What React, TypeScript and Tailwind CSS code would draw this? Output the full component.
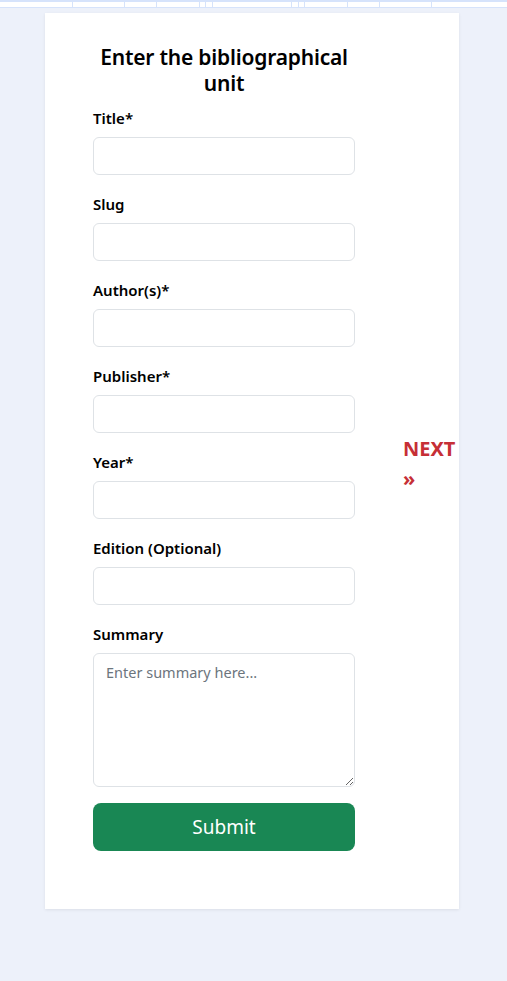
import React from "react";

const fields = [
  "Title*",
  "Slug",
  "Author(s)*",
  "Publisher*",
  "Year*",
  "Edition (Optional)",
];

const ticks = [72, 124, 156, 199, 205, 212, 291, 298, 304, 347, 379, 431];

export default function App() {
  return (
    <div
      className="min-h-[981px] bg-[#edf1fa] relative"
      style={{ fontFamily: '"Noto Sans", "Open Sans", sans-serif' }}
    >
      {/* top strip left over from the page above */}
      <div className="h-[8px] bg-white border-t-2 border-b border-[#d6e3fb] relative">
        {ticks.map((x) => (
          <div
            key={x}
            className="absolute top-0 bottom-0 w-px bg-[#d6e3fb]"
            style={{ left: x }}
          />
        ))}
      </div>

      <div className="pt-[5px] px-[45px] pr-[48px]">
        <div className="bg-white shadow-[0_1px_3px_rgba(0,0,0,0.08)] h-[896px] pl-[48px] flex items-center">
          {/* form column */}
          <div className="w-[262px] self-start pt-[31px]">
            <h2 className="text-[21px] leading-[26px] font-semibold text-center text-black mb-[11px] tracking-[-0.2px]">
              Enter the bibliographical
              <br />
              unit
            </h2>
            {fields.map((label) => (
              <div key={label} className="mb-[18px]">
                <label className="block text-[15px] font-semibold text-black leading-[22px] mb-[8px]">
                  {label}
                </label>
                <input
                  type="text"
                  className="block w-full h-[38px] rounded-[6px] border border-[#dee2e6] bg-white px-3"
                />
              </div>
            ))}
            <div className="mb-[16px]">
              <label className="block text-[15px] font-semibold text-black leading-[22px] mb-[8px]">
                Summary
              </label>
              <textarea
                placeholder="Enter summary here..."
                className="block w-full h-[134px] rounded-[6px] border border-[#dee2e6] bg-white px-[12px] py-[8px] text-[14.5px] text-[#212529] placeholder:text-[#6c757d] resize-y"
              />
            </div>
            <button className="w-full h-[48px] rounded-[8px] bg-[#198754] text-white text-[19px]">
              Submit
            </button>
          </div>

          {/* next link */}
          <a
            href="#"
            className="ml-[48px] w-[56px] text-[20px] font-bold leading-[30px] text-[#c62f36] mt-[6px]"
          >
            NEXT »
          </a>
        </div>
      </div>
    </div>
  );
}
